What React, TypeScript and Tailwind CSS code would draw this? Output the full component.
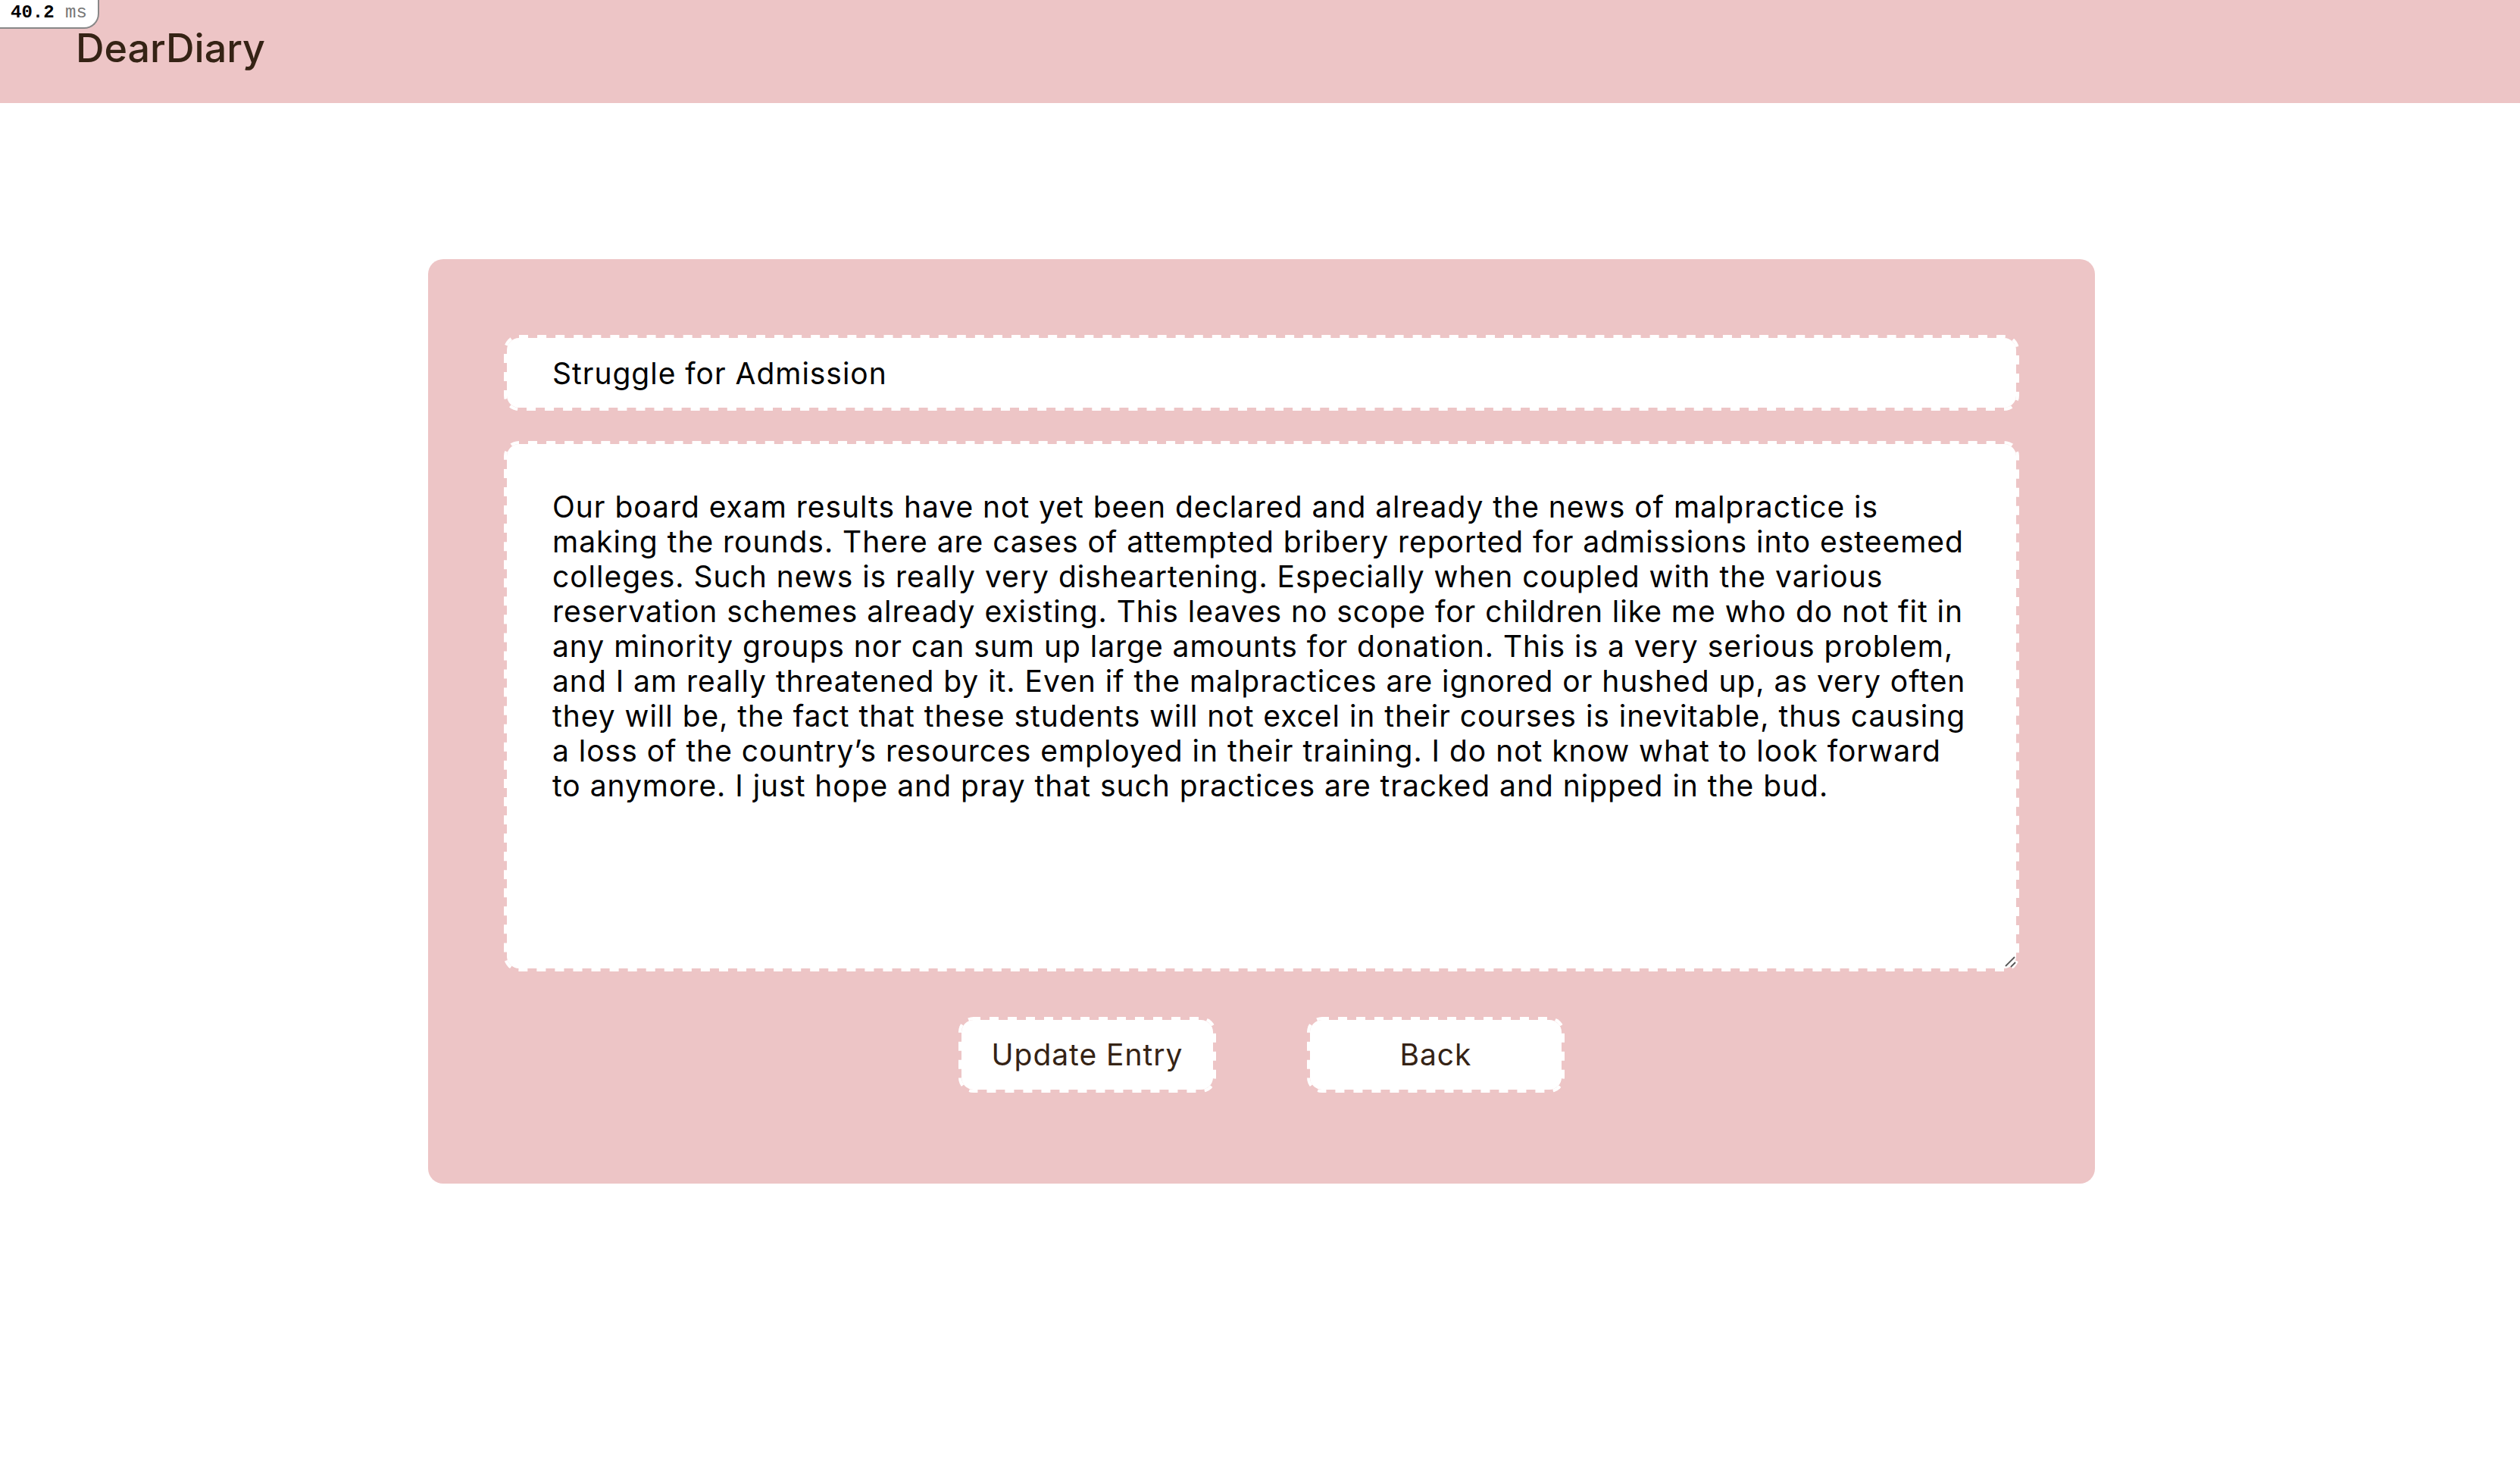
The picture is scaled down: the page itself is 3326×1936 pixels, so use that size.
import { useState } from "react";
import type { ReactNode } from "react";

const ENTRY =
  "Our board exam results have not yet been declared and already the news of malpractice is making the rounds. There are cases of attempted bribery reported for admissions into esteemed colleges. Such news is really very disheartening. Especially when coupled with the various reservation schemes already existing. This leaves no scope for children like me who do not fit in any minority groups nor can sum up large amounts for donation. This is a very serious problem, and I am really threatened by it. Even if the malpractices are ignored or hushed up, as very often they will be, the fact that these students will not excel in their courses is inevitable, thus causing a loss of the country’s resources employed in their training. I do not know what to look forward to anymore. I just hope and pray that such practices are tracked and nipped in the bud.";

type DashProps = { dash: string; offset?: number; pathLength?: number };

// Stitched outline: even white dashes running round a rounded box.
function Stitched({
  dash,
  offset = 0,
  pathLength,
  className = "",
  children,
}: DashProps & { className?: string; children: ReactNode }) {
  return (
    <div className={`relative flex overflow-hidden rounded-[20px] ${className}`}>
      <svg aria-hidden="true" className="pointer-events-none absolute inset-0 h-full w-full">
        <rect
          width="100%"
          height="100%"
          rx="20"
          fill="none"
          stroke="white"
          strokeWidth="8"
          strokeDasharray={dash}
          strokeDashoffset={offset}
          pathLength={pathLength}
        />
      </svg>
      {children}
    </div>
  );
}

const inner =
  "w-full rounded-[20px] border-4 border-transparent bg-white bg-clip-padding text-[39px] tracking-wide outline-none";

export default function App() {
  const [title, setTitle] = useState("Struggle for Admission");
  const [body, setBody] = useState(ENTRY);

  return (
    <div className="min-h-screen bg-white font-[Inter,sans-serif]">
      <header className="relative flex h-[136px] items-center bg-[#edc5c6] px-[100px] pb-2">
        <a href="#" className="text-[52px] leading-[72px] font-medium text-[#352315]">
          DearDiary
        </a>
        <div className="absolute top-0 left-0 h-[38px] rounded-br-[20px] border-r-2 border-b-2 border-[#888] bg-white px-[14px] font-['Liberation_Mono',monospace] text-[24px] leading-[34px] whitespace-pre text-[#777]">
          <span className="font-bold text-black">40.2</span> ms
        </div>
      </header>

      <main className="flex justify-center pt-[206px] pl-1">
        <form
          className="flex w-full max-w-[2200px] flex-col rounded-[20px] bg-[#edc5c6] px-[100px] pt-[100px] pb-[120px]"
          onSubmit={(e) => e.preventDefault()}
        >
          <Stitched dash="1 1" pathLength={346}>
            <input
              aria-label="Title"
              value={title}
              onChange={(e) => setTitle(e.target.value)}
              className={`${inner} h-[100px] px-[60px] text-black`}
            />
          </Stitched>

          <Stitched dash="1 1" offset={1} pathLength={446} className="mt-10">
            <textarea
              aria-label="Entry"
              value={body}
              onChange={(e) => setBody(e.target.value)}
              className={`${inner} h-[700px] resize-none py-[60px] pr-[52px] pl-[60px] leading-[46px] text-black`}
            />
            <svg
              aria-hidden="true"
              viewBox="0 0 16 16"
              className="pointer-events-none absolute right-1 bottom-1 h-4 w-4"
            >
              <path d="M2 13 14 1M9 14l6-6" stroke="#555" strokeWidth="1.8" fill="none" />
            </svg>
          </Stitched>

          <div className="mt-[60px] flex justify-center gap-[120px]">
            <Stitched dash="12 12" offset={3} className="w-[340px]">
              <button type="submit" className={`${inner} h-[100px] text-[#352315]`}>
                Update Entry
              </button>
            </Stitched>
            <Stitched dash="12 12" offset={3} className="w-[340px]">
              <button type="button" className={`${inner} h-[100px] text-[#352315]`}>
                Back
              </button>
            </Stitched>
          </div>
        </form>
      </main>
    </div>
  );
}
